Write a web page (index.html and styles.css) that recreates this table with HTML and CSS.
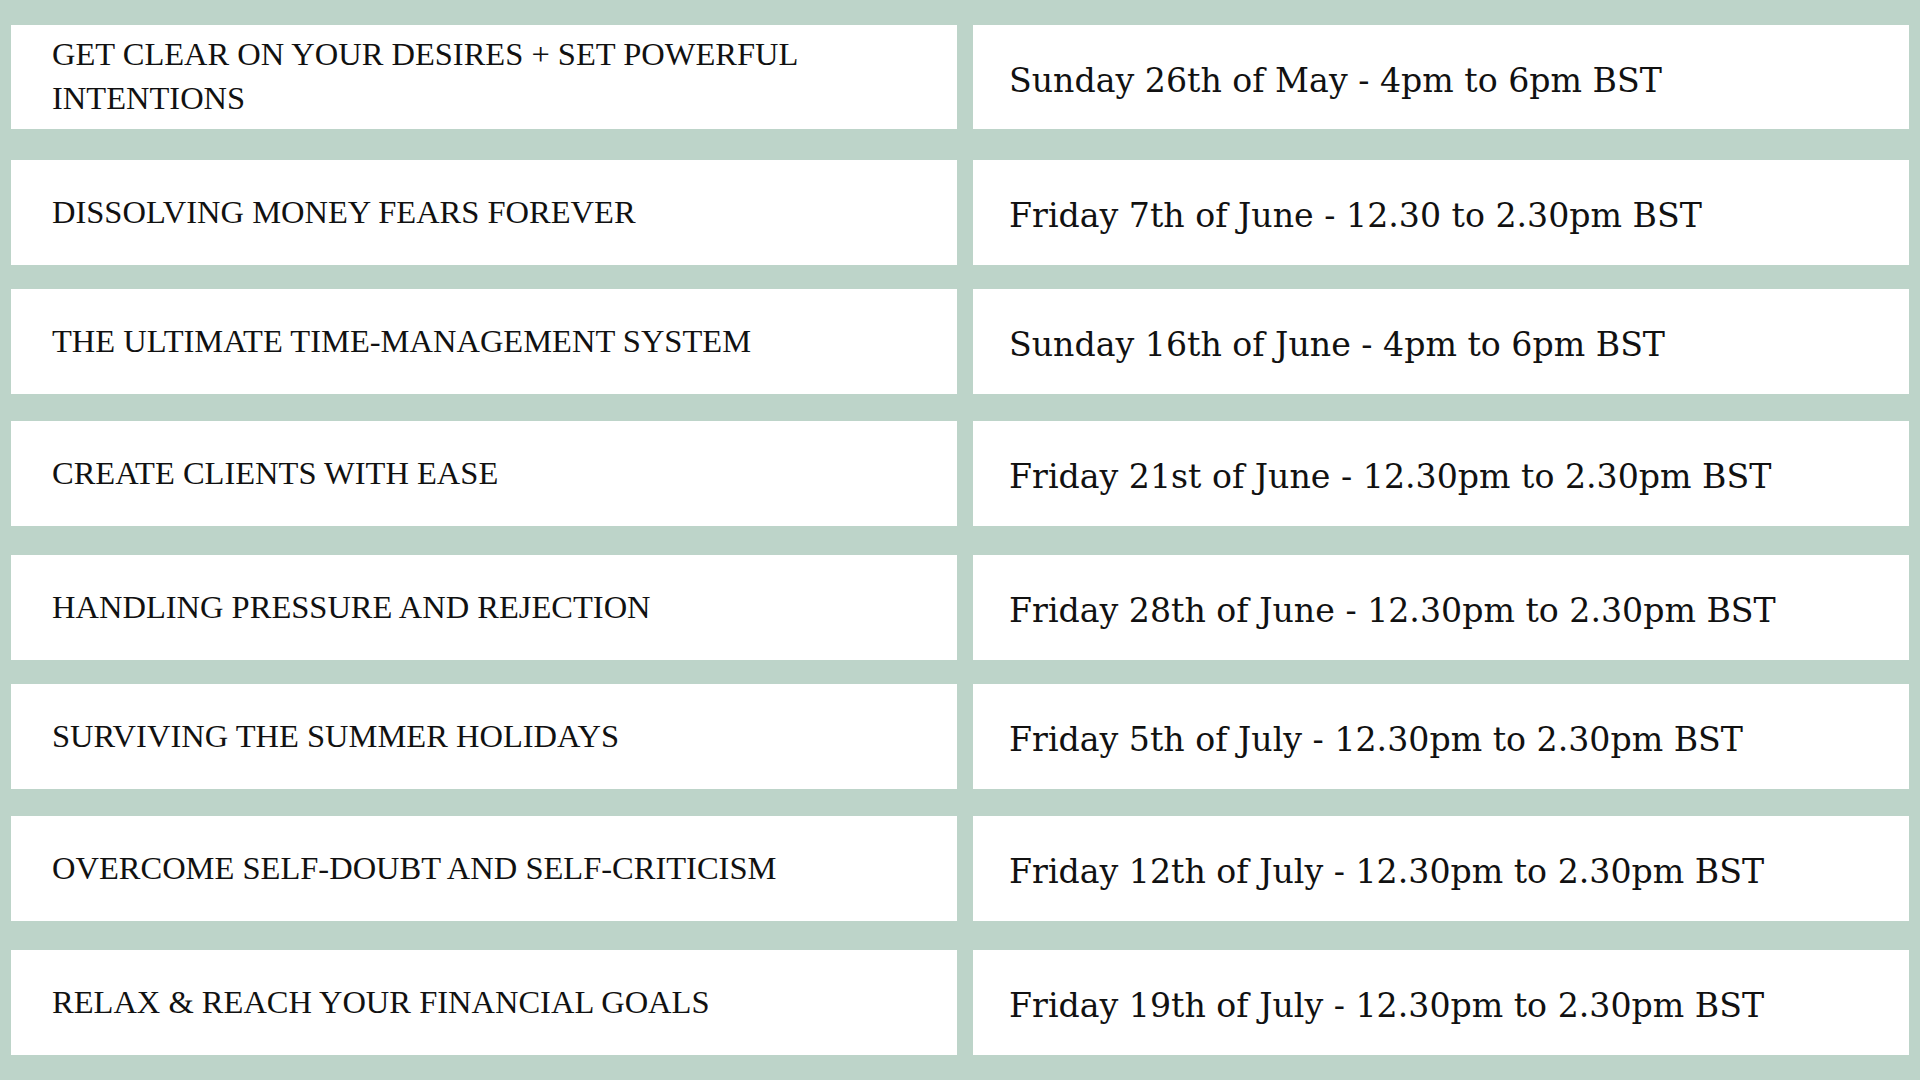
FILE: index.html
```html
<!DOCTYPE html>
<html lang="en">
<head>
<meta charset="utf-8">
<title>Schedule</title>
<link rel="stylesheet" href="styles.css">
</head>
<body>
<main class="schedule">
  <div class="row"><div class="cell title">GET CLEAR ON YOUR DESIRES + SET POWERFUL<br>INTENTIONS</div><div class="cell date">Sunday 26th of May - 4pm to 6pm BST</div></div>
  <div class="row"><div class="cell title">DISSOLVING MONEY FEARS FOREVER</div><div class="cell date">Friday 7th of June - 12.30 to 2.30pm BST</div></div>
  <div class="row"><div class="cell title">THE ULTIMATE TIME-MANAGEMENT SYSTEM</div><div class="cell date">Sunday 16th of June - 4pm to 6pm BST</div></div>
  <div class="row"><div class="cell title">CREATE CLIENTS WITH EASE</div><div class="cell date">Friday 21st of June - 12.30pm to 2.30pm BST</div></div>
  <div class="row"><div class="cell title">HANDLING PRESSURE AND REJECTION</div><div class="cell date">Friday 28th of June - 12.30pm to 2.30pm BST</div></div>
  <div class="row"><div class="cell title">SURVIVING THE SUMMER HOLIDAYS</div><div class="cell date">Friday 5th of July - 12.30pm to 2.30pm BST</div></div>
  <div class="row"><div class="cell title">OVERCOME SELF-DOUBT AND SELF-CRITICISM</div><div class="cell date">Friday 12th of July - 12.30pm to 2.30pm BST</div></div>
  <div class="row"><div class="cell title">RELAX &amp; REACH YOUR FINANCIAL GOALS</div><div class="cell date">Friday 19th of July - 12.30pm to 2.30pm BST</div></div>
</main>
</body>
</html>
```
FILE: styles.css
```css
html, body {
  margin: 0;
  padding: 0;
  background: #bdd4c9;
}
body {
  width: 1920px;
  height: 1080px;
  overflow: hidden;
}
.schedule {
  display: flex;
  flex-direction: column;
  padding: 25px 11px 0 11px;
}
.row {
  display: grid;
  grid-template-columns: 946px 936px;
  column-gap: 16px;
  height: 105px;
}
.row:nth-child(1) { height: 104px; }
.row:nth-child(2) { margin-top: 31px; }
.row:nth-child(3) { margin-top: 24px; }
.row:nth-child(4) { margin-top: 27px; }
.row:nth-child(5) { margin-top: 29px; }
.row:nth-child(6) { margin-top: 24px; }
.row:nth-child(7) { margin-top: 27px; }
.row:nth-child(8) { margin-top: 29px; }
.cell {
  background: #ffffff;
  display: flex;
  align-items: center;
  color: #111111;
  box-sizing: border-box;
}
.title {
  font-family: "Liberation Serif", serif;
  font-size: 32.5px;
  line-height: 44px;
  padding-left: 41px;
  padding-bottom: 2px;
}
.date {
  font-family: "DejaVu Serif", serif;
  font-size: 33.2px;
  padding-left: 36px;
  padding-top: 6px;
}
```
